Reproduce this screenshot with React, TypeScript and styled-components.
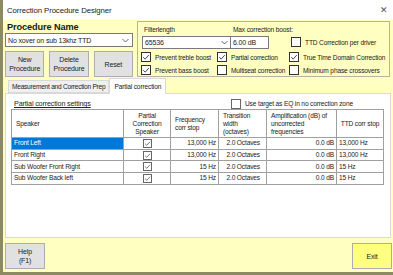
import React from 'react';
import styled, { createGlobalStyle } from 'styled-components';

const GlobalStyle = createGlobalStyle`
  html, body {
    margin: 0;
    padding: 0;
    background: #8c8a62;
    overflow: hidden;
  }
  body {
    font-family: "Liberation Sans", Arial, sans-serif;
    font-size: 6.6px;
    letter-spacing: -0.15px;
    color: #1a1a1a;
  }
`;

const Window = styled.div`
  margin-left: 3px;
  width: 390px;
  height: 272px;
  display: flex;
  flex-direction: column;
  background: #ffffc2;
`;

const TitleBar = styled.div`
  height: 20px;
  flex: 0 0 20px;
  background: #ffffff;
  display: flex;
  align-items: center;
  justify-content: space-between;
  padding: 0 4px 0 4px;
  font-size: 7.8px;
  letter-spacing: -0.1px;
  color: #222;
`;

const Close = styled.span`
  font-size: 9px;
  color: #555;
  margin-right: 1px;
`;

const Top = styled.div`
  display: flex;
  height: 57px;
  padding: 0 0 0 2px;
`;

const LeftCol = styled.div`
  width: 128px;
  display: flex;
  flex-direction: column;
`;

const Heading = styled.div`
  font-weight: bold;
  font-size: 9.2px;
  letter-spacing: -0.1px;
  line-height: 12px;
  margin-top: 1px;
  padding-left: 2px;
`;

const Select = styled.div<{ $w?: number; $h?: number }>`
  box-sizing: border-box;
  width: ${p => (p.$w ? `${p.$w}px` : '100%')};
  height: ${p => p.$h ?? 14}px;
  border: 1px solid #7a7a7a;
  background: #fff;
  display: flex;
  align-items: center;
  justify-content: space-between;
  padding: 0 3px 0 2px;
  font-size: 7px;
`;

const ButtonRow = styled.div`
  display: flex;
  gap: 5px;
  margin-top: 4px;
`;

const Btn = styled.div<{ $yellow?: boolean; $w?: number }>`
  box-sizing: border-box;
  width: ${p => (p.$w ? `${p.$w}px` : 'auto')};
  flex: ${p => (p.$w ? 'none' : '1')};
  height: 26px;
  border: 1px solid #adadad;
  background: ${p => (p.$yellow ? '#ffff80' : '#e1e1e1')};
  display: flex;
  align-items: center;
  justify-content: center;
  text-align: center;
  font-size: 7px;
  line-height: 9px;
  color: #222;
`;

const GroupBox = styled.div`
  box-sizing: border-box;
  margin: 1px 0 0 4px;
  width: 253px;
  height: 56px;
  border: 1px solid #b4b4a0;
  padding: 3px 0 0 3px;
  display: flex;
  flex-direction: column;
`;

const FieldRow = styled.div`
  display: flex;
  align-items: flex-end;
`;

const Field = styled.div<{ $w: number; $ml?: number }>`
  width: ${p => p.$w}px;
  margin-left: ${p => p.$ml ?? 0}px;
  display: flex;
  flex-direction: column;
`;

const Label = styled.div<{ $indent?: number }>`
  line-height: 9px;
  white-space: nowrap;
  padding-left: ${p => p.$indent ?? 0}px;
  margin-bottom: 2px;
`;

const TextInput = styled.div`
  box-sizing: border-box;
  width: 39px;
  height: 13px;
  border: 1px solid #7a7a7a;
  background: #fff;
  padding-left: 2px;
  font-size: 7px;
  line-height: 11px;
`;

const CheckGrid = styled.div`
  display: grid;
  grid-template-columns: 76px 72px auto;
  row-gap: 3px;
  margin-top: 3px;
`;

const CheckItem = styled.div`
  display: flex;
  align-items: center;
  gap: 4px;
  height: 10px;
  white-space: nowrap;
`;

const Box = styled.span<{ $size?: number; $soft?: boolean }>`
  box-sizing: border-box;
  width: ${p => p.$size ?? 10}px;
  height: ${p => p.$size ?? 10}px;
  flex: none;
  border: 1px solid ${p => (p.$soft ? '#666' : '#333')};
  background: #fff;
  display: inline-flex;
  align-items: center;
  justify-content: center;
`;

const TabStrip = styled.div`
  display: flex;
  align-items: flex-end;
  height: 16px;
  margin: 0 0 0 5px;
`;

const Tab = styled.div<{ $active?: boolean }>`
  box-sizing: border-box;
  height: ${p => (p.$active ? 16 : 13)}px;
  padding: 0 ${p => (p.$active ? 4 : 3)}px;
  border: 1px solid #d9d9d9;
  border-bottom: ${p => (p.$active ? 'none' : '1px solid #d9d9d9')};
  background: ${p => (p.$active ? '#fff' : '#f0f0f0')};
  display: flex;
  align-items: center;
  position: relative;
  z-index: ${p => (p.$active ? 1 : 0)};
  margin-bottom: ${p => (p.$active ? -1 : 0)}px;
  letter-spacing: ${p => (p.$active ? '-0.15px' : '-0.25px')};
`;

const Panel = styled.div`
  box-sizing: border-box;
  margin-left: 2px;
  width: 386px;
  height: 145px;
  background: #fff;
  border: 1px solid #d9d9d9;
  padding: 4px 0 0 5px;
`;

const PanelHead = styled.div`
  display: flex;
  align-items: center;
  height: 11px;
`;

const Underlined = styled.div`
  width: 217px;
  padding-left: 3px;
  font-size: 7.2px;
  text-decoration: underline;
  color: #222;
`;

const Table = styled.table`
  border-collapse: collapse;
  table-layout: fixed;
  width: 372px;
  color: #222;

  td,
  th {
    border: 1px solid #a0a0a0;
    padding: 0 2px 0 2px;
    overflow: hidden;
    white-space: nowrap;
  }
  th {
    font-weight: normal;
    height: 27px;
    line-height: 8px;
    vertical-align: middle;
  }
  td {
    height: 10.7px;
    line-height: 10px;
  }
`;

const Th = styled.th<{ $align?: string }>`
  text-align: ${p => p.$align ?? 'left'};
  padding-left: ${p => (p.$align === 'center' ? 2 : 4)}px !important;
`;

const Td = styled.td<{ $align?: string; $sel?: boolean; $pr?: number }>`
  text-align: ${p => p.$align ?? 'left'};
  background: ${p => (p.$sel ? '#0078d7' : '#fff')};
  color: ${p => (p.$sel ? '#fff' : '#222')};
  padding-right: ${p => p.$pr ?? 2}px !important;
`;

const CellCheck = styled.span`
  display: inline-flex;
  vertical-align: middle;
`;

const Footer = styled.div`
  display: flex;
  justify-content: space-between;
  padding: 5px 1px 0 2px;
`;

const Check = ({ checked = false, size = 10, soft = false }: { checked?: boolean; size?: number; soft?: boolean }) => (
  <Box $size={size} $soft={soft}>
    {checked && (
      <svg width={size - 2} height={size - 2} viewBox="0 0 10 10">
        <path d="M1.5 5.2 L4 7.6 L8.6 2.4" fill="none" stroke={soft ? '#555' : '#333'} strokeWidth="1.1" />
      </svg>
    )}
  </Box>
);

const Chevron = () => (
  <svg width="7" height="5" viewBox="0 0 7 5">
    <path d="M0.5 1 L3.5 4 L6.5 1" fill="none" stroke="#555" strokeWidth="0.9" />
  </svg>
);

const rows = [
  { name: 'Front Left', freq: '13,000 Hz', ttd: '13,000 Hz' },
  { name: 'Front Right', freq: '13,000 Hz', ttd: '13,000 Hz' },
  { name: 'Sub Woofer Front Right', freq: '15 Hz', ttd: '15 Hz' },
  { name: 'Sub Woofer Back left', freq: '15 Hz', ttd: '15 Hz' },
];

export default function App() {
  return (
    <>
      <GlobalStyle />
      <Window>
        <TitleBar>
          <span>Correction Procedure Designer</span>
          <Close>✕</Close>
        </TitleBar>
        <Top>
          <LeftCol>
            <Heading>Procedure Name</Heading>
            <Select>
              <span>No xover on sub 13khz TTD</span>
              <Chevron />
            </Select>
            <ButtonRow>
              <Btn>New<br />Procedure</Btn>
              <Btn>Delete<br />Procedure</Btn>
              <Btn>Reset</Btn>
            </ButtonRow>
          </LeftCol>
          <GroupBox>
            <FieldRow>
              <Field $w={90} $ml={1}>
                <Label $indent={2}>Filterlength</Label>
                <Select $w={90} $h={13}>
                  <span>65536</span>
                  <Chevron />
                </Select>
              </Field>
              <Field $w={61} $ml={-2}>
                <Label $indent={3}>Max correction boost:</Label>
                <TextInput>6.00 dB</TextInput>
              </Field>
              <CheckItem style={{ marginBottom: 2 }}>
                <Check /> TTD Correction per driver
              </CheckItem>
            </FieldRow>
            <CheckGrid>
              <CheckItem><Check checked /> Prevent treble boost</CheckItem>
              <CheckItem><Check checked /> Partial correction</CheckItem>
              <CheckItem><Check checked /> True Time Domain Correction</CheckItem>
              <CheckItem><Check checked /> Prevent bass boost</CheckItem>
              <CheckItem><Check /> Multiseat correction</CheckItem>
              <CheckItem><Check /> Minimum phase crossovers</CheckItem>
            </CheckGrid>
          </GroupBox>
        </Top>
        <TabStrip>
          <Tab>Measurement and Correction Prep</Tab>
          <Tab $active>Partial correction</Tab>
        </TabStrip>
        <Panel>
          <PanelHead>
            <Underlined>Partial correction settings</Underlined>
            <CheckItem>
              <Check soft /> Use target as EQ in no correction zone
            </CheckItem>
          </PanelHead>
          <Table>
            <colgroup>
              <col style={{ width: 112 }} />
              <col style={{ width: 47 }} />
              <col style={{ width: 48 }} />
              <col style={{ width: 48 }} />
              <col style={{ width: 70 }} />
              <col style={{ width: 47 }} />
            </colgroup>
            <thead>
              <tr>
                <Th>Speaker</Th>
                <Th $align="center">Partial<br />Correction<br />Speaker</Th>
                <Th>Frequency<br />corr stop</Th>
                <Th>Transition<br />width<br />(octaves)</Th>
                <Th>Amplification (dB) of<br />uncorrected<br />frequencies</Th>
                <Th $align="center">TTD corr stop</Th>
              </tr>
            </thead>
            <tbody>
              {rows.map((r, i) => (
                <tr key={r.name}>
                  <Td $sel={i === 0}>{r.name}</Td>
                  <Td $align="center">
                    <CellCheck>
                      <Check checked soft size={9} />
                    </CellCheck>
                  </Td>
                  <Td $align="right">{r.freq}</Td>
                  <Td $align="right" $pr={6}>2.0 Octaves</Td>
                  <Td $align="right">0.0 dB</Td>
                  <Td>{r.ttd}</Td>
                </tr>
              ))}
            </tbody>
          </Table>
        </Panel>
        <Footer>
          <Btn $w={40}>Help<br />(F1)</Btn>
          <Btn $w={40} $yellow>Exit</Btn>
        </Footer>
      </Window>
    </>
  );
}
